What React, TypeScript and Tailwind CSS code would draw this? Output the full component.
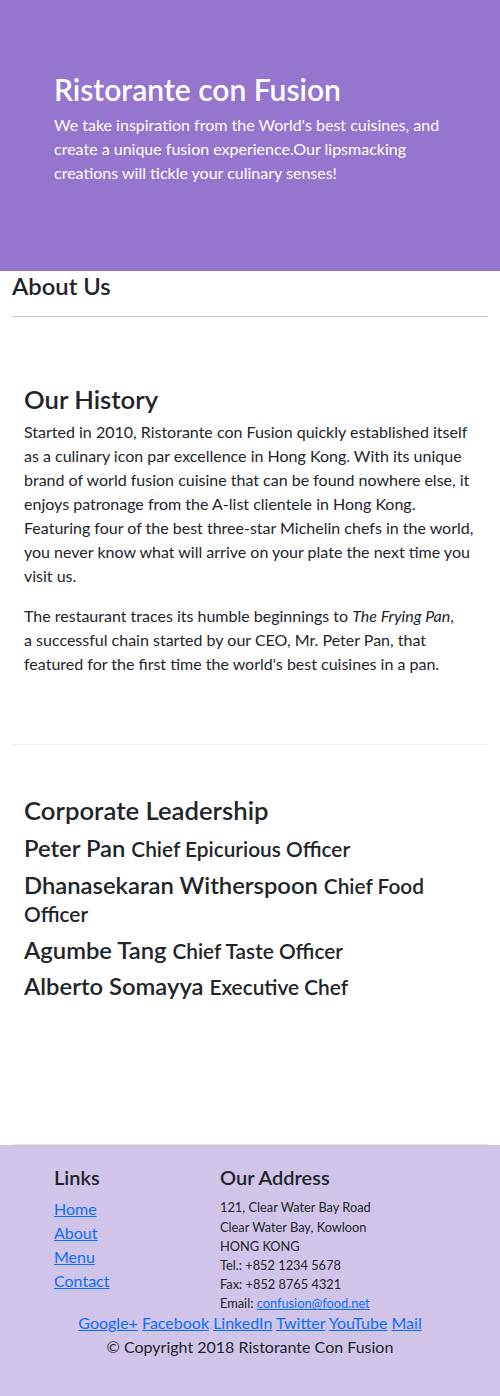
const leaders = [
  { name: 'Peter Pan', role: 'Chief Epicurious Officer' },
  { name: 'Dhanasekaran Witherspoon', role: 'Chief Food Officer' },
  { name: 'Agumbe Tang', role: 'Chief Taste Officer' },
  { name: 'Alberto Somayya', role: 'Executive Chef' },
];

const socials = ['Google+', 'Facebook', 'LinkedIn', 'Twitter', 'YouTube', 'Mail'];

export default function App() {
  return (
    <div className="min-h-[1396px] bg-white text-[#212529] text-base leading-6 font-['Lato',sans-serif]">
      <header className="bg-[#9575cd] px-[54px] pt-[71px] h-[271px] text-white">
        <h1 className="text-[30px] leading-[1.2] font-semibold mb-[6px]">Ristorante con Fusion</h1>
        <p className="w-[392px]">
          We take inspiration from the World's best cuisines, and create a unique fusion experience.Our
          lipsmacking creations will tickle your culinary senses!
        </p>
      </header>

      <main className="px-3">
        <h3 className="text-[23.8px] leading-[1.2] font-semibold pt-[1px]">About Us</h3>
        <hr className="mt-[15px] border-t border-[#c8c9ca]" />

        <section className="px-3 pt-[67px] pb-[68px]">
          <h2 className="text-[25.7px] leading-[1.2] font-semibold mb-[6px]">Our History</h2>
          <p className="mb-4">
            Started in 2010, Ristorante con Fusion quickly established itself as a culinary icon par
            excellence in Hong Kong. With its unique brand of world fusion cuisine that can be found
            nowhere else, it enjoys patronage from the A-list clientele in Hong Kong. Featuring four of
            the best three-star Michelin chefs in the world, you never know what will arrive on your
            plate the next time you visit us.
          </p>
          <p className="max-w-[440px]">
            The restaurant traces its humble beginnings to <em>The Frying Pan</em>, a successful chain
            started by our CEO, Mr. Peter Pan, that featured for the first time the world's best
            cuisines in a pan.
          </p>
        </section>

        <hr className="border-t border-[#eeeeee]" />

        <section className="px-3 pt-[50px] h-[399px]">
          <h2 className="text-[25.7px] leading-[1.2] font-semibold mb-[8px]">Corporate Leadership</h2>
          {leaders.map((l) => (
            <h3 key={l.name} className="text-[23.8px] leading-[1.2] font-semibold mb-2">
              {l.name} <small className="text-[87.5%]">{l.role}</small>
            </h3>
          ))}
        </section>

        <hr className="border-t border-[#e6e6e6]" />
      </main>

      <footer className="bg-[#d1c4e9] pt-[20px] pb-[40px]">
        <div className="flex">
          <div className="w-[208px] pl-[54px]">
            <h5 className="text-[20px] leading-[1.2] font-semibold mb-2">Links</h5>
            <ul className="flex flex-col">
              {['Home', 'About', 'Menu', 'Contact'].map((l) => (
                <li key={l}>
                  <a href="#" className="text-[#0d6efd] underline">{l}</a>
                </li>
              ))}
            </ul>
          </div>
          <div className="pl-3">
            <h5 className="text-[20px] leading-[1.2] font-semibold mb-[9px]">Our Address</h5>
            <address className="not-italic text-[12.8px] leading-[1.5]">
              121, Clear Water Bay Road<br />
              Clear Water Bay, Kowloon<br />
              HONG KONG<br />
              Tel.: +852 1234 5678<br />
              Fax: +852 8765 4321<br />
              Email: <a href="#" className="text-[#0d6efd] underline">confusion@food.net</a>
            </address>
          </div>
        </div>
        <div className="text-center -mt-[3px]">
          {socials.map((s, i) => (
            <span key={s}>
              <a href="#" className="text-[#0d6efd] underline">{s}</a>
              {i < socials.length - 1 ? ' ' : ''}
            </span>
          ))}
        </div>
        <p className="text-center">© Copyright 2018 Ristorante Con Fusion</p>
      </footer>
    </div>
  );
}
